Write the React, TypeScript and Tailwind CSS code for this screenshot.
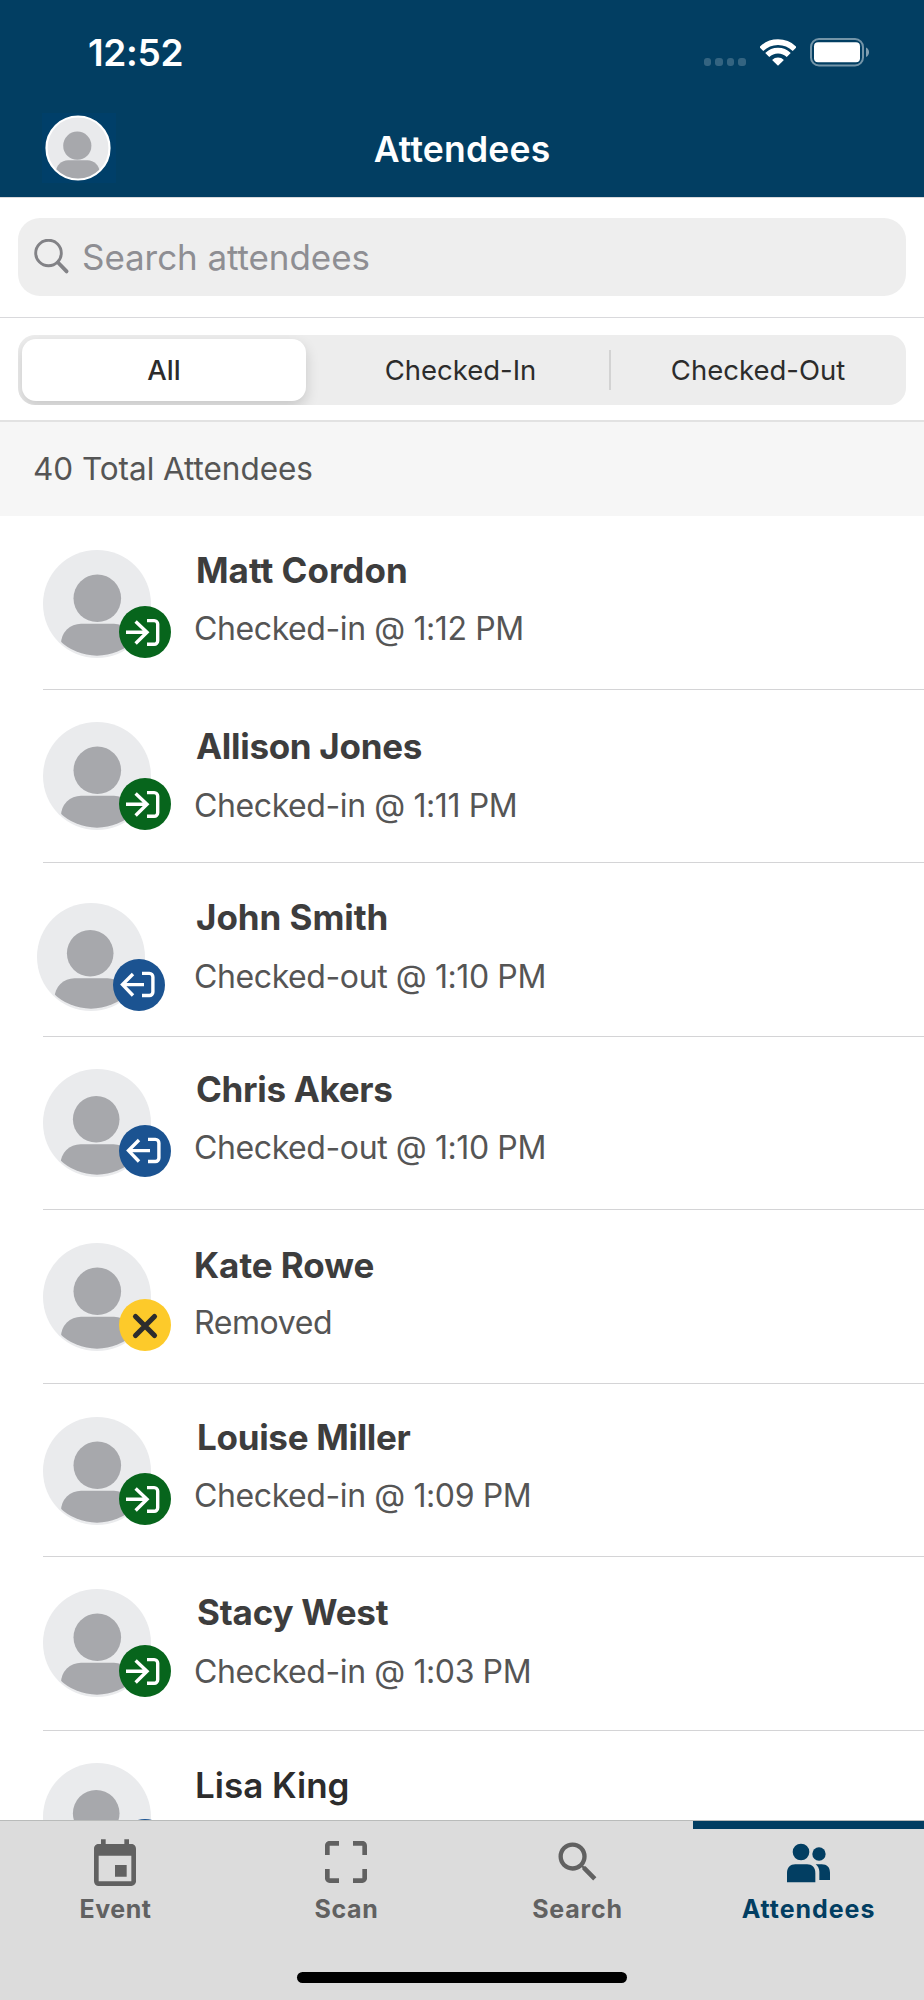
import { useState } from "react";
import clsx from "clsx";
import { MdCropFree, MdEvent, MdSearch } from "react-icons/md";

type Status = "in" | "out" | "removed";

type Attendee = {
  name: string;
  detail?: string;
  status: Status;
  row: string;
  avatar: string;
  text: string;
  nameClass: string;
  detailClass?: string;
};

const attendees: Attendee[] = [
  {
    name: "Matt Cordon",
    detail: "Checked-in @ 1:12 PM",
    status: "in",
    row: "h-[174px]",
    avatar: "mt-[34px]",
    text: "pt-[33px]",
    nameClass: "pl-[2px] font-bold",
    detailClass: "mt-[18px]",
  },
  {
    name: "Allison Jones",
    detail: "Checked-in @ 1:11 PM",
    status: "in",
    row: "h-[173px]",
    avatar: "mt-[32px]",
    text: "pt-[35px]",
    nameClass: "pl-[2px] font-bold tracking-[-0.3px]",
    detailClass: "mt-[19px]",
  },
  {
    name: "John Smith",
    detail: "Checked-out @ 1:10 PM",
    status: "out",
    row: "h-[174px]",
    avatar: "mt-[40px] -ml-[6px] mr-[6px]",
    text: "pt-[33px]",
    nameClass: "pl-[2px] font-bold tracking-[-0.05px]",
    detailClass: "mt-[19px]",
  },
  {
    name: "Chris Akers",
    detail: "Checked-out @ 1:10 PM",
    status: "out",
    row: "h-[173px]",
    avatar: "mt-[32px]",
    text: "pt-[31px]",
    nameClass: "pl-[2px] font-bold tracking-[-0.3px]",
    detailClass: "mt-[18px]",
  },
  {
    name: "Kate Rowe",
    detail: "Removed",
    status: "removed",
    row: "h-[174px]",
    avatar: "mt-[33px]",
    text: "pt-[34px]",
    nameClass: "font-bold tracking-[-0.05px]",
    detailClass: "mt-[17px]",
  },
  {
    name: "Louise Miller",
    detail: "Checked-in @ 1:09 PM",
    status: "in",
    row: "h-[173px]",
    avatar: "mt-[33px]",
    text: "pt-[32px]",
    nameClass: "pl-[3px] font-bold tracking-[-0.3px]",
    detailClass: "mt-[18px]",
  },
  {
    name: "Stacy West",
    detail: "Checked-in @ 1:03 PM",
    status: "in",
    row: "h-[174px]",
    avatar: "mt-[32px]",
    text: "pt-[34px]",
    nameClass: "pl-[3px] font-bold tracking-[-0.2px]",
    detailClass: "mt-[19px]",
  },
  {
    name: "Lisa King",
    status: "out",
    row: "h-[173px]",
    avatar: "mt-[32px]",
    text: "pt-[33px]",
    nameClass: "pl-px font-semibold text-[#2c2c2c]",
  },
];

function StatusBar() {
  return (
    <div className="flex h-[105px] items-start justify-between pl-[88px] pr-[55px]">
      <time className="pt-[31px] text-[37px] leading-[44px] font-semibold tracking-[-0.3px]">
        12:52
      </time>
      <div className="flex pt-[38px]">
        <div className="mr-[14px] mt-[20px] flex gap-[4px]">
          <span className="h-[8px] w-[7.6px] rounded-[3px] bg-white/20" />
          <span className="h-[8px] w-[7.6px] rounded-[3px] bg-white/20" />
          <span className="h-[8px] w-[7.6px] rounded-[3px] bg-white/20" />
          <span className="h-[8px] w-[7.6px] rounded-[3px] bg-white/20" />
        </div>
        <svg className="mr-[14px] mt-px" width="36" height="27" viewBox="0 0 108 80" fill="none">
          <path d="M3.8 29.8a71 71 0 0 1 100.4 0M21.8 47.8a45.5 45.5 0 0 1 64.4 0" stroke="#fff" strokeWidth="17" />
          <path d="M54 80 36.3 62.3a25 25 0 0 1 35.4 0Z" fill="#fff" />
        </svg>
        <svg width="59" height="29" viewBox="0 0 59 29" fill="none">
          <rect x="1" y="1" width="52" height="26.5" rx="8" stroke="#fff" strokeOpacity=".45" strokeWidth="2" />
          <rect x="4" y="4.2" width="46" height="20" rx="4" fill="#fff" />
          <path d="M56 9.5c4 1.5 4 8 0 9.5Z" fill="#fff" fillOpacity=".5" />
        </svg>
      </div>
    </div>
  );
}

function ProfileButton() {
  return (
    <button aria-label="Profile" className="flex h-[70px] w-[74px] items-center justify-center bg-[#003f69]">
      <svg className="-ml-[2px]" width="66" height="66" viewBox="0 0 66 66">
        <clipPath id="profile">
          <circle cx="33" cy="33" r="30.5" />
        </clipPath>
        <circle cx="33" cy="33" r="31.5" fill="#e9eaec" stroke="#fff" strokeWidth="2.2" />
        <circle cx="32.3" cy="30.7" r="14.1" fill="#a7a8ac" />
        <rect x="11" y="45.3" width="43.5" height="40" rx="12" fill="#a7a8ac" clipPath="url(#profile)" />
      </svg>
    </button>
  );
}

// Badge in the lower right corner of an avatar
function StatusBadge({ status }: { status: Status }) {
  return (
    <svg className="absolute top-[56px] left-[75.5px]" width="52" height="52" viewBox="0 0 52 52" fill="none">
      {status === "in" && (
        <>
          <circle cx="26" cy="26" r="26" fill="#07651c" />
          <path
            d="M7 26.3h21M16.6 15.5l11.4 10.8-11.4 11.2M28 14.6h7.2a3.5 3.5 0 0 1 3.5 3.5v16.7a3.5 3.5 0 0 1-3.5 3.5H28"
            stroke="#fff"
            strokeWidth="3.4"
          />
        </>
      )}
      {status === "out" && (
        <>
          <circle cx="26" cy="26" r="26" fill="#1b5391" />
          <path
            d="M31 25.6H10M20 15 9.5 25.6 20 36.5M29 14.4h7.4a3.5 3.5 0 0 1 3.5 3.5V33a3.5 3.5 0 0 1-3.5 3.5H29"
            stroke="#fff"
            strokeWidth="3.4"
          />
        </>
      )}
      {status === "removed" && (
        <>
          <circle cx="26" cy="26" r="26" fill="#fdca2a" />
          <path d="m16.5 17.5 19 19m0-19-19 19" stroke="#2d2d2d" strokeWidth="5.2" strokeLinecap="round" />
        </>
      )}
    </svg>
  );
}

function Avatar({ status, className }: { status: Status; className: string }) {
  const out = status === "out";

  return (
    <div className={clsx("relative h-[108px] w-[108px] shrink-0", className)}>
      <svg width="108" height="108" viewBox="0 0 108 108">
        <clipPath id="avatar">
          <circle cx="54" cy="52" r="53.7" />
        </clipPath>
        <circle cx="54" cy="54" r="54" fill="#eaebed" />
        <circle cx={out ? 53.2 : 54.3} cy={out ? 50.3 : 48.3} r={out ? 23.3 : 23.8} fill="#a7a8ac" />
        <rect
          x={out ? 17.5 : 18}
          y={out ? 75.2 : 73.7}
          width="73"
          height="60"
          rx="20"
          fill="#a7a8ac"
          clipPath="url(#avatar)"
        />
      </svg>
      <StatusBadge status={status} />
    </div>
  );
}

function PeopleIcon() {
  return (
    <svg width="43" height="40" viewBox="0 0 129 120" fill="currentColor">
      <circle cx="42" cy="27" r="25" />
      <circle cx="96" cy="33" r="20" />
      <path d="M0 118V90c0-17 10-26 25-26h35c15 0 25 9 25 26v28Z" />
      <path d="M86 64h18c16 0 25 9 25 25v22H97V86c0-9-4-17-11-22Z" />
    </svg>
  );
}

const filters = ["All", "Checked-In", "Checked-Out"];

export default function App() {
  const [filter, setFilter] = useState("All");

  return (
    <main className="flex h-[2000px] w-[924px] flex-col overflow-hidden bg-white font-['Inter',sans-serif]">
      <header className="h-[197px] shrink-0 bg-[#023e62] text-white">
        <StatusBar />
        <div className="grid grid-cols-[1fr_auto_1fr] items-start pt-[8px] pl-[42px] pr-[42px]">
          <ProfileButton />
          <h1 className="pt-[15px] text-[35.5px] leading-[44px] font-semibold tracking-[0.2px]">Attendees</h1>
        </div>
      </header>

      <section className="h-[121px] shrink-0 border-y border-[#d9d9dc] px-[18px] pt-[20px]">
        <label className="flex h-[78px] items-center rounded-[22px] bg-[#eeeeee] pl-[16px]">
          <svg width="36" height="36" viewBox="0 0 36 36" fill="none" stroke="#828286" strokeLinecap="round">
            <circle cx="14.5" cy="14" r="12.8" strokeWidth="2.9" />
            <path d="m24 23.5 8.6 8.9" strokeWidth="3.8" />
          </svg>
          <span className="ml-[12px] text-[35px] leading-[44px] tracking-[-0.08px] text-[#8e8e93]">
            Search attendees
          </span>
        </label>
      </section>

      <section className="h-[104px] shrink-0 border-b-2 border-[#e2e2e2] px-[18px] pt-[17px]">
        <div className="flex h-[70px] overflow-hidden rounded-[17px] bg-[#ededed] p-[4px]">
          {filters.map((item) => (
            <button
              key={item}
              onClick={() => setFilter(item)}
              className={clsx(
                "h-[62px] shrink-0 text-[27.5px] leading-[34px] text-[#2c2c2c]",
                item === "All" && "w-[284px]",
                item === "Checked-In" && "w-[305px] pl-[6px]",
                item === "Checked-Out" && "w-[291px] pl-[3px]",
                filter === item && "rounded-[14px] bg-white font-medium shadow-[0_6px_14px_rgba(0,0,0,0.16)]"
              )}
            >
              <span
                className={clsx(
                  "flex h-[40px] items-center justify-center",
                  item === "Checked-In" && "border-r-2 border-[#d3d3d3]"
                )}
              >
                {item}
              </span>
            </button>
          ))}
        </div>
      </section>

      <h2 className="h-[94px] shrink-0 bg-[#f6f6f6] pt-[26px] pl-[33px] text-[31.5px] leading-[42px] tracking-[-0.05px] text-[#555555]">
        40 Total Attendees
      </h2>

      <ul className="min-h-0 flex-1 overflow-hidden pl-[43px]">
        {attendees.map((person) => (
          <li key={person.name} className={clsx("flex border-b border-[#d4d4d6]", person.row)}>
            <Avatar status={person.status} className={person.avatar} />
            <div className={clsx("ml-[43px] text-[#3d3d3d]", person.text)}>
              <p className={clsx("text-[35px] leading-[42px]", person.nameClass)}>{person.name}</p>
              {person.detail && (
                <p
                  className={clsx(
                    "text-[32px] leading-[40px] tracking-[-0.4px] text-[#555555]",
                    person.detailClass
                  )}
                >
                  {person.detail}
                </p>
              )}
            </div>
          </li>
        ))}
      </ul>

      <footer className="h-[180px] shrink-0 border-t border-[#b9bbba] bg-[#dcdcdc] text-[#616161]">
        <nav className="grid h-[151px] grid-cols-4 text-[25px] leading-[30px] font-bold">
          <a className="flex flex-col items-center pt-[16px]">
            <MdEvent size={56} className="-ml-px" />
            <span className="mt-px tracking-[0.5px]">Event</span>
          </a>
          <a className="flex flex-col items-center pt-[13px]">
            <MdCropFree size={56} className="-ml-px" />
            <span className="mt-[4px] tracking-[0.6px]">Scan</span>
          </a>
          <a className="flex flex-col items-center pt-[15px]">
            <MdSearch size={52} />
            <span className="mt-[6px] tracking-[0.8px]">Search</span>
          </a>
          <a className="flex flex-col items-center border-t-8 border-[#023e62] pt-[14px] text-[#023e62]">
            <PeopleIcon />
            <span className="mt-[11px] tracking-[0.95px]">Attendees</span>
          </a>
        </nav>
        <div className="mx-auto h-[11px] w-[330px] rounded-full bg-black" />
      </footer>
    </main>
  );
}
